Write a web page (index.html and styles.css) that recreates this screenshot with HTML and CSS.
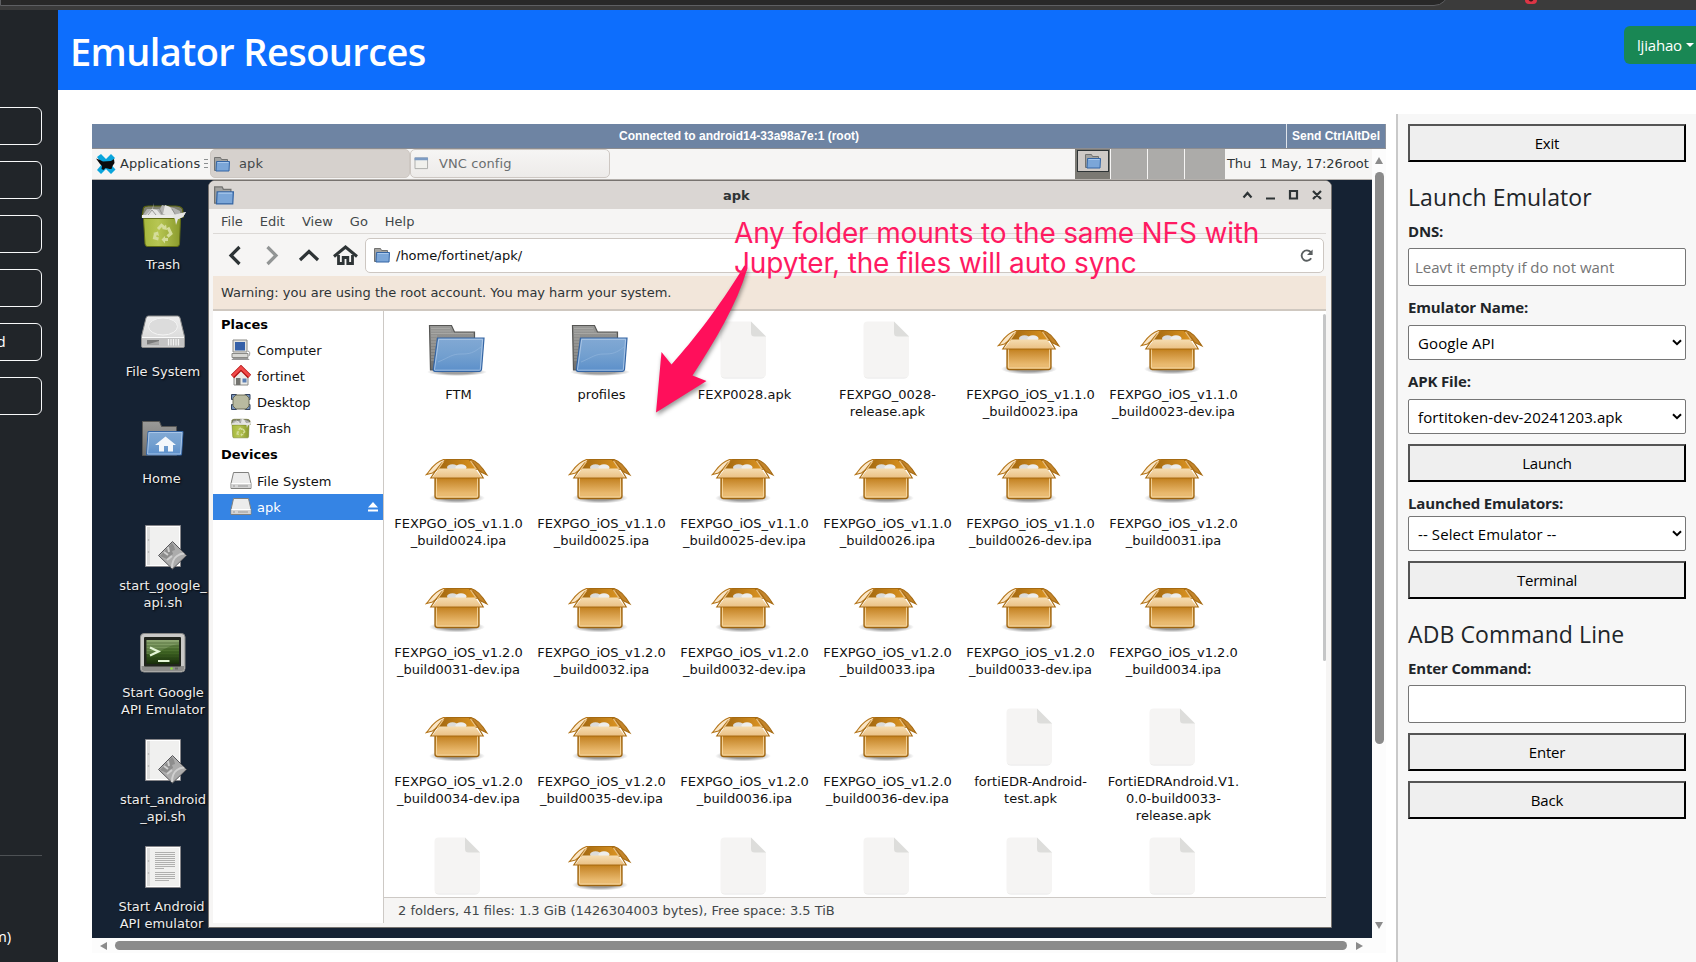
FILE: index.html
```html
<!DOCTYPE html>
<html lang="en">
<head>
<meta charset="utf-8">
<title>Emulator Resources</title>
<link rel="stylesheet" href="styles.css">
</head>
<body>
<svg class="defs" width="0" height="0">
  <defs>
    <linearGradient id="gBox" x1="0" y1="0" x2="0" y2="1"><stop offset="0" stop-color="#c17d11"/><stop offset=".15" stop-color="#c98a2e"/><stop offset=".75" stop-color="#e9b96e"/><stop offset="1" stop-color="#eabd76"/></linearGradient>
    <linearGradient id="gFlap" x1="0" y1="0" x2="0" y2="1"><stop offset="0" stop-color="#f5dcb0"/><stop offset="1" stop-color="#eac083"/></linearGradient>
    <linearGradient id="gIn" x1="0" y1="0" x2="1" y2="0"><stop offset="0" stop-color="#a0660f"/><stop offset="1" stop-color="#dd9522"/></linearGradient>
    <linearGradient id="gFold" x1="0" y1="0" x2="0" y2="1"><stop offset="0" stop-color="#82a9d4"/><stop offset=".55" stop-color="#729fcf"/><stop offset="1" stop-color="#5b8fca"/></linearGradient>
    <linearGradient id="gGrey" x1="0" y1="0" x2="0" y2="1"><stop offset="0" stop-color="#9a9a98"/><stop offset="1" stop-color="#6f6f6d"/></linearGradient>
    <linearGradient id="gDisk" x1="0" y1="0" x2="0" y2="1"><stop offset="0" stop-color="#eeeeee"/><stop offset="1" stop-color="#d3d3d3"/></linearGradient>
    <linearGradient id="gBin" x1="0" y1="0" x2="1" y2="0"><stop offset="0" stop-color="#a6b83e"/><stop offset=".4" stop-color="#b7c653"/><stop offset="1" stop-color="#8a9a2c"/></linearGradient>
    <linearGradient id="gTerm" x1="0" y1="0" x2="0" y2="1"><stop offset="0" stop-color="#7f9a63"/><stop offset=".5" stop-color="#446a26"/><stop offset="1" stop-color="#172c0a"/></linearGradient>
    <radialGradient id="gShade"><stop offset=".5" stop-color="#000" stop-opacity=".38"/><stop offset="1" stop-color="#000" stop-opacity="0"/></radialGradient>

    <symbol id="box" viewBox="0 0 64 64">
      <ellipse cx="32" cy="50" rx="28" ry="5.500" fill="url(#gShade)"/>
      <path d="M19 11.500h26l7 10H12z" fill="url(#gIn)" stroke="#a56a12"/>
      <ellipse cx="27.500" cy="19.500" rx="5.500" ry="3.200" fill="#dcdcda"/><ellipse cx="36" cy="19.500" rx="5.500" ry="3.200" fill="#ededeb"/>
      <path d="M10 29.500h44V48a2.500 2.500 0 0 1-2.500 2.500h-39A2.500 2.500 0 0 1 10 48z" fill="url(#gBox)" stroke="#9d6410" stroke-width="1.300"/>
      <path d="M11.500 30V48q0 1 1 1h39q1 0 1-1V30" fill="none" stroke="#f7d9a4" stroke-width="1" opacity=".85"/>
      <path d="M18.500 11.500h2L12 21.500 7.500 25 1.500 26.500C5 23 8 15 18.500 11.500z" fill="#fae6c6" stroke="#b4751a" stroke-width="1.100"/>
      <path d="M44 11.500h2c6 1.500 12 9 16 15.500L55 23.500z" fill="#c4852a" stroke="#a56a12" stroke-width="1.100"/>
      <path d="M14 20.500h36l7 9.500H7z" fill="url(#gFlap)" stroke="none"/>
      <path d="M17 14.500 11.500 21.500 5.800 30h52.400L52 19.500 47.500 14" fill="none" stroke="#ab6f16" stroke-width="1.200"/>
      <path d="M18.500 13.500 12.500 22M45.500 13l6 8.500" stroke="#ecc384" stroke-width="1.300"/>
    </symbol>
    <symbol id="file" viewBox="0 0 64 64">
      <path d="M14 3h25l15 15v37.500a4 4 0 0 1-4 4H14a4 4 0 0 1-4-4V7a4 4 0 0 1 4-4z" fill="#e6e6e5"/>
      <path d="M13.500 2.500H40l15 15V55a3.800 3.800 0 0 1-4 3.800H13.500A3.800 3.800 0 0 1 9.500 55V6.500a4 4 0 0 1 4-4z" fill="#f5f4f3"/>
      <path d="M40 2.500l15 15H43.500a3.500 3.500 0 0 1-3.500-3.500z" fill="#dddddb"/>
    </symbol>
    <symbol id="folder" viewBox="0 0 64 64">
      <ellipse cx="32" cy="53" rx="30" ry="4" fill="url(#gShade)"/>
      <path d="M4.500 6.500h22l3 6.500h20v38h-44z" fill="url(#gGrey)" stroke="#565654" stroke-width="1.200"/>
      <path d="M6 9.500h19M6 12h20M6 14.500h42M6 17h6M6 20h5M6 23h5M6 26h5M6 29h4M6 32h4M6 35h4M6 38h3M6 41h3" stroke="#b0b0ae" stroke-width=".700"/>
      <path d="M12.500 19h46.500l-2.500 31.500q-.3 1.800-2 1.800H10q-1.800 0-1.700-1.800z" fill="url(#gFold)" stroke="#3465a4" stroke-width="1.200"/>
      <path d="M13.700 20.300h43.900L55.300 50.500q-.2.700-1 .7H10q-.6 0-.5-.7z" fill="none" stroke="#b5cdea" stroke-width="1" opacity=".8"/>
      <path d="M13 43c12-5 14-8 23-8s12-1 20-7" fill="none" stroke="#94b7dd" stroke-width="1" opacity=".6"/>
    </symbol>
    <symbol id="disk" viewBox="0 0 48 48">
      <path d="M9.500 8h29q2 0 2.500 2l4.500 18.500V38q0 1.500-1.500 1.500H4Q2.500 39.500 2.500 38v-9.500L7 10q.5-2 2.500-2z" fill="url(#gDisk)" stroke="#8b8b8b"/>
      <ellipse cx="24" cy="18.500" rx="14.500" ry="8.500" fill="#dcdcdc" stroke="#f4f4f4"/>
      <path d="M3 30h42v8.500H3z" fill="#c3c3c3"/><path d="M3 29.500h42" stroke="#fafafa"/>
      <path d="M8 32h12v4.500H8z" fill="#7a7a7a"/><path d="M8 36.500 20 33v3.500z" fill="#aaa"/>
      <path d="M29.500 31v6.500M32 31v6.500M34.500 31v6.500M37 31v6.500M39.500 31v6.500" stroke="#f2f2f2" stroke-width="1.200"/>
    </symbol>
    <symbol id="sdisk" viewBox="0 0 22 22">
      <path d="M3.500 2.500h15l2.500 11v5h-20v-5z" fill="#ececec" stroke="#80807e"/>
      <path d="M1.500 13.500h19v4.500h-19z" fill="#d4d4d4"/><path d="M1.500 13.500h19" stroke="#fff"/>
      <path d="M4 17V15M9 17v-2M11 17v-2M13 17v-2M15 17v-2M17 17v-2" stroke="#999"/>
    </symbol>
    <symbol id="bin" viewBox="0 0 48 48">
      <path d="M4.500 7q1-2 5-2h27q5 0 7 3l1 8H3z" fill="#7d7f6d" stroke="#59620f" stroke-width="1.200"/>
      <path d="M4 14 8 8l5 0 2-6-1 6 7 0 2-4 12 3 6 3 1 6-4 4-8-2z" fill="#b1b1af"/>
      <path d="m7 14 6-6 5 1 4 5zM24 13l2-9 5 2 5 7-4 3zM34 14l13-3-3 5-5 2-2 6-2-5z" fill="#e4e4e2"/>
      <path d="m9 14 4-5 4 5M20 7l3 6M33 8l3 5M37 15l8-2" stroke="#858583" fill="none" stroke-width=".8"/>
      <path d="M4.500 17.500h37L40.500 43q-.2 2.500-2.500 2.500H8.500Q6.200 45.500 6 43z" fill="url(#gBin)" stroke="#606b14"/>
      <path d="M3 15.500h33q3 0 5 1.500" stroke="#ecece9" stroke-width="3.200" fill="none"/>
      <path d="m33 15 14-4-3 5-5 2-2 6-1-6z" fill="#e6e6e4"/>
      <g fill="none" stroke="#d5dd9b" stroke-width="3"><path d="m19 28 3.500-3.800 3 2.500M29 26.500l3 6-3.500 3M24.500 38.500H29M19.500 38l-4-1 1-4.500"/></g>
      <path d="m27 23.500 1 5.500-5-1zM26 35v7.500l-3.500-4zM14 32l5-1.500 1 4.500z" fill="#d5dd9b"/>
    </symbol>
    <symbol id="page" viewBox="0 0 48 48">
      <path d="M6.500 3.500h35v41h-35z" fill="#f0f0ef" stroke="#86868a"/><path d="M7.500 4.500h33v39h-33z" fill="none" stroke="#fff"/>
      <path d="M8 5h3v38H8z" fill="#dededd"/><circle cx="9.500" cy="18" r=".8" fill="#aaa"/><circle cx="9.500" cy="30" r=".8" fill="#aaa"/>
    </symbol>
    <symbol id="script" viewBox="0 0 48 48">
      <use href="#page"/>
      <path d="M33.500 19.500 47.500 33.500 33.500 47 19.500 33.500z" fill="#acacac" stroke="#57575a"/>
      <path d="m33 21 2 3 1 4-3 1 1 3-3 2-3 3-7-3z" fill="#8d8d8d"/>
      <path d="M33 46c0-6 2-10 5-12s5-3 7-2M29 25l1 5M25 30l4 3M28 38l5-4" stroke="#d0d0d0" stroke-width="2" fill="none"/>
    </symbol>
    <symbol id="textdoc" viewBox="0 0 48 48">
      <use href="#page"/>
      <path d="M16 9.500h20M16 11.500h20M16 13.500h20M16 15.500h20M16 17.500h20M16 19.500h20M16 21.500h20M16 23.500h20M16 25.500h9M16 29.500h20M16 31.500h20M16 33.500h20M16 35.500h20M16 37.500h14" stroke="#b0b0af" stroke-width="1"/>
    </symbol>
    <symbol id="term" viewBox="0 0 48 48">
      <rect x="1.500" y="4.500" width="44.500" height="38.500" rx="3.500" fill="#c9c9c7" stroke="#898987"/>
      <path d="M2.500 37h42.500v3q0 2-2 2h-38q-2.500 0-2.500-2z" fill="#8c8c8a"/>
      <rect x="5" y="8" width="37" height="29.500" rx="1" fill="#20241d"/>
      <rect x="7.500" y="11" width="32.500" height="24" fill="url(#gTerm)"/>
      <path d="M7.500 11H40v4C28 16 24 24 7.500 25z" fill="#a8bf8e" opacity=".35"/>
      <path d="M7.500 14H40M7.500 17H40M7.500 20H40M7.500 23H40M7.500 26H40M7.500 29H40M7.500 32H40" stroke="#203a0f" stroke-width=".8" opacity=".5"/>
      <path d="m11 18.500 8.500 4-8.500 4" fill="none" stroke="#e4f5d6" stroke-width="2.200"/><path d="M19 32h11.500" stroke="#e4f5d6" stroke-width="2"/>
      <circle cx="32.500" cy="39.500" r="1.200" fill="#8ae234"/><path d="M36 39.500h3" stroke="#6b6b69" stroke-width="2"/>
    </symbol>
    <symbol id="homefolder" viewBox="0 0 48 48">
      <path d="M3.500 6.500h17l2 5h15v29h-34z" fill="url(#gGrey)" stroke="#565654"/>
      <path d="M9 16.500h35l-1.500 23.500H7.500z" fill="url(#gFold)" stroke="#3465a4"/>
      <path d="M10 17.500h33l-1.400 21.500H8.600z" fill="none" stroke="#a9c6e8"/>
      <path d="M26.500 21.500 37 30h-3v6.500h-5V31h-4v5.500h-5V30h-4z" fill="#f3f7fb"/>
    </symbol>
    <symbol id="sfolder" viewBox="0 0 16 16">
      <path d="M.5 1.500h6l1 2h6v11h-13z" fill="#a3a3a1" stroke="#737371"/>
      <path d="M2.500 5.500h13l-.5 9.500H2z" fill="#7ba6d8" stroke="#3465a4"/><path d="M3.500 6.500h11" stroke="#a9c8ec"/>
    </symbol>
    <symbol id="window" viewBox="0 0 16 14"><path d="M1 1h13.500v11.500H1z" fill="#f0f0ec" stroke="#a9aaa7"/><path d="M.500.500h14.500v3H.500z" fill="#7d9cc4"/></symbol>
  </defs>
</svg>

<div class="browser"><div class="omnibox"></div><div class="badge"></div></div>

<div class="app">
  <aside class="side">
    <nav class="side-nav">
      <a class="side-btn"></a><a class="side-btn"></a><a class="side-btn"></a><a class="side-btn"></a><a class="side-btn">d</a><a class="side-btn"></a>
    </nav>
    <div class="side-rule"></div>
    <div class="side-foot">m)</div>
  </aside>

  <div class="main">
    <header class="header">
      <h1 class="title">Emulator Resources</h1>
      <button class="user">ljiahao<span class="caret"></span></button>
    </header>

    <div class="body">
      <section class="vnc">
        <div class="vnc-bar"><span class="vnc-status">Connected to android14-33a98a7e:1 (root)</span><span class="vnc-send">Send CtrlAltDel</span></div>
        <div class="vnc-view">
          <div class="desk">
            <div class="panel">
              <div class="apps">
                <svg class="mouse" viewBox="0 0 20 20"><path d="M1 3 5 0l5 5 5-5 4 4-5 5.500 5.500 6L15 20l-5-5-5 5-4-4 5-6z" fill="#0aa5dc"/><path d="M0 4.500 4 6l3 1.500 8-.5 3-2 .500 4-2 3-1 3h-2l-4-1-2 2-2-1 .500-3L4 10z" fill="#0b0b0b"/></svg>
                <span>Applications</span><i class="grip"></i>
              </div>
              <div class="task active"><svg class="i16"><use href="#sfolder"/></svg><span>apk</span></div>
              <div class="task"><svg class="i14" viewBox="0 0 16 14"><use href="#window"/></svg><span>VNC config</span></div>
              <div class="pager"><div class="pg on"><div class="mini"><svg class="i16"><use href="#sfolder"/></svg></div></div><div class="pg"></div><div class="pg"></div><div class="pg"></div></div>
              <div class="clock">Thu&nbsp; 1 May, 17:26</div><div class="whoami">root</div>
            </div>
            <div class="screen">
              <div class="shortcuts">
                <div class="short"><svg class="i48"><use href="#bin"/></svg><span>Trash</span></div>
                <div class="short"><svg class="i48"><use href="#disk"/></svg><span>File System</span></div>
                <div class="short"><svg class="i48"><use href="#homefolder"/></svg><span class="nudge">Home</span></div>
                <div class="short"><svg class="i48"><use href="#script"/></svg><span>start_google_<br>api.sh</span></div>
                <div class="short"><svg class="i48"><use href="#term"/></svg><span>Start Google<br>API Emulator</span></div>
                <div class="short"><svg class="i48"><use href="#script"/></svg><span>start_android<br>_api.sh</span></div>
                <div class="short"><svg class="i48"><use href="#textdoc"/></svg><span class="nudge">Start Android<br>API emulator</span></div>
              </div>

              <div class="win">
                <div class="win-title">
                  <svg class="i20"><use href="#sfolder"/></svg>
                  <b class="win-name">apk</b>
                  <svg class="win-ctl" viewBox="0 0 82 16" fill="none" stroke="#2e3436" stroke-width="2.200"><path d="m2.500 10.500 4-4.500 4 4.500M25 11.500h9M49 4h7v7.500h-7zM72 4l8 8M80 4l-8 8"/></svg>
                </div>
                <div class="win-body">
                  <div class="menu"><span>File</span><span>Edit</span><span>View</span><span>Go</span><span>Help</span></div>
                  <div class="tools">
                    <svg class="nav" viewBox="0 0 140 24" fill="none" stroke-width="3.200"><path d="M18.500 4 10 12.500l8.500 8.500" stroke="#2e3436"/><path d="m46.500 4 8.500 8.500L46.500 21" stroke="#929595"/><path d="m79 17 9-8.500L97 17" stroke="#2e3436"/><path d="m113 13.500 11.500-9.500L136 13.500" stroke="#2e3436" stroke-width="3"/><path d="M117.500 12v8.500h4.700v-6h4.600v6h4.700V12" stroke="#2e3436" stroke-width="2.800"/></svg>
                    <div class="path"><svg class="i16"><use href="#sfolder"/></svg><span>/home/fortinet/apk/</span><svg class="reload" viewBox="0 0 16 16"><path d="M13 11a5.500 5.500 0 1 1-.5-6.500" fill="none" stroke="#5a5f60" stroke-width="2"/><path d="M8.500 7.500h6V1.500z" fill="#5a5f60"/></svg></div>
                  </div>
                  <div class="warn">Warning: you are using the root account. You may harm your system.</div>
                  <div class="split">
                    <div class="places">
                      <div class="grp">Places</div>
                      <div class="place"><svg class="i22" viewBox="0 0 22 22"><path d="M3 1h14v12H3z" fill="#e3e3e0" stroke="#8a8a86"/><path d="M5 3h10v8.500H5z" fill="#3560a8"/><path d="M2 14.500h16v4H2z" fill="#d8d8d4" stroke="#8a8a86"/><path d="M3 19.500h15l1 1H2z" fill="#eee" stroke="#999"/><path d="M18 12q3 1 1 5" stroke="#999" fill="none"/></svg>Computer</div>
                      <div class="place"><svg class="i22" viewBox="0 0 22 22"><path d="M4 11 11 4l7 7v9H4z" fill="#ebebe8" stroke="#8b8b88"/><path d="M2.500 11.500 11 3l8.500 8.500" fill="none" stroke="#b01010" stroke-width="4.600"/><path d="M2.500 11 11 2.800 19.500 11" fill="none" stroke="#f04a4a" stroke-width="2.800"/><path d="M6 13h4.500v7H6z" fill="#73736f"/><path d="M12.500 13.500h4v4h-4z" fill="#5b7fb5"/></svg>fortinet</div>
                      <div class="place"><svg class="i22" viewBox="0 0 22 22"><path d="M1.500 3.500h5v5h-5zM15 3.500h5v5h-5zM1.500 13.500h5v5h-5zM15 13.500h5v5h-5z" fill="#7590b8" stroke="#33425e"/><path d="M6 4h10l3 3v8l-3 3H6l-3-3V7z" fill="#b9baa0" stroke="#6c6d58"/></svg>Desktop</div>
                      <div class="place"><svg class="i22" viewBox="0 0 48 48"><use href="#bin"/></svg>Trash</div>
                      <div class="grp">Devices</div>
                      <div class="place"><svg class="i22"><use href="#sdisk"/></svg>File System</div>
                      <div class="place sel"><svg class="i22"><use href="#sdisk"/></svg>apk<svg class="eject" viewBox="0 0 10 10"><path d="M5 0l5 5.500H0zM0 7.500h10v2H0z" fill="#fff"/></svg></div>
                    </div>
                    <div class="right">
                      <div class="files">
                        <div class="f"><svg class="i64"><use href="#folder"/></svg><span>FTM</span></div>
                        <div class="f"><svg class="i64"><use href="#folder"/></svg><span>profiles</span></div>
                        <div class="f"><svg class="i64"><use href="#file"/></svg><span>FEXP0028.apk</span></div>
                        <div class="f"><svg class="i64"><use href="#file"/></svg><span>FEXPGO_0028-<br>release.apk</span></div>
                        <div class="f"><svg class="i64"><use href="#box"/></svg><span>FEXPGO_iOS_v1.1.0<br>_build0023.ipa</span></div>
                        <div class="f"><svg class="i64"><use href="#box"/></svg><span>FEXPGO_iOS_v1.1.0<br>_build0023-dev.ipa</span></div>

                        <div class="f"><svg class="i64"><use href="#box"/></svg><span>FEXPGO_iOS_v1.1.0<br>_build0024.ipa</span></div>
                        <div class="f"><svg class="i64"><use href="#box"/></svg><span>FEXPGO_iOS_v1.1.0<br>_build0025.ipa</span></div>
                        <div class="f"><svg class="i64"><use href="#box"/></svg><span>FEXPGO_iOS_v1.1.0<br>_build0025-dev.ipa</span></div>
                        <div class="f"><svg class="i64"><use href="#box"/></svg><span>FEXPGO_iOS_v1.1.0<br>_build0026.ipa</span></div>
                        <div class="f"><svg class="i64"><use href="#box"/></svg><span>FEXPGO_iOS_v1.1.0<br>_build0026-dev.ipa</span></div>
                        <div class="f"><svg class="i64"><use href="#box"/></svg><span>FEXPGO_iOS_v1.2.0<br>_build0031.ipa</span></div>

                        <div class="f"><svg class="i64"><use href="#box"/></svg><span>FEXPGO_iOS_v1.2.0<br>_build0031-dev.ipa</span></div>
                        <div class="f"><svg class="i64"><use href="#box"/></svg><span>FEXPGO_iOS_v1.2.0<br>_build0032.ipa</span></div>
                        <div class="f"><svg class="i64"><use href="#box"/></svg><span>FEXPGO_iOS_v1.2.0<br>_build0032-dev.ipa</span></div>
                        <div class="f"><svg class="i64"><use href="#box"/></svg><span>FEXPGO_iOS_v1.2.0<br>_build0033.ipa</span></div>
                        <div class="f"><svg class="i64"><use href="#box"/></svg><span>FEXPGO_iOS_v1.2.0<br>_build0033-dev.ipa</span></div>
                        <div class="f"><svg class="i64"><use href="#box"/></svg><span>FEXPGO_iOS_v1.2.0<br>_build0034.ipa</span></div>

                        <div class="f"><svg class="i64"><use href="#box"/></svg><span>FEXPGO_iOS_v1.2.0<br>_build0034-dev.ipa</span></div>
                        <div class="f"><svg class="i64"><use href="#box"/></svg><span>FEXPGO_iOS_v1.2.0<br>_build0035-dev.ipa</span></div>
                        <div class="f"><svg class="i64"><use href="#box"/></svg><span>FEXPGO_iOS_v1.2.0<br>_build0036.ipa</span></div>
                        <div class="f"><svg class="i64"><use href="#box"/></svg><span>FEXPGO_iOS_v1.2.0<br>_build0036-dev.ipa</span></div>
                        <div class="f"><svg class="i64"><use href="#file"/></svg><span>fortiEDR-Android-<br>test.apk</span></div>
                        <div class="f"><svg class="i64"><use href="#file"/></svg><span>FortiEDRAndroid.V1.<br>0.0-build0033-<br>release.apk</span></div>

                        <div class="f"><svg class="i64"><use href="#file"/></svg></div>
                        <div class="f"><svg class="i64"><use href="#box"/></svg></div>
                        <div class="f"><svg class="i64"><use href="#file"/></svg></div>
                        <div class="f"><svg class="i64"><use href="#file"/></svg></div>
                        <div class="f"><svg class="i64"><use href="#file"/></svg></div>
                        <div class="f"><svg class="i64"><use href="#file"/></svg></div>
                        <div class="thumb"></div>
                      </div>
                      <div class="status">2 folders, 41 files: 1.3 GiB (1426304003 bytes), Free space: 3.5 TiB</div>
                    </div>
                  </div>
                </div>
              </div>
            </div>
          </div>
          <div class="vscroll"><i class="tri up"></i><i class="vthumb"></i><i class="tri down"></i></div>
          <div class="hscroll"><i class="tri left"></i><i class="hthumb"></i><i class="tri rightward"></i></div>
        </div>
      </section>

      <aside class="ctl">
        <button class="btn">Exit</button>
        <h3 class="h3">Launch Emulator</h3>
        <label class="lab tight">DNS:</label>
        <div class="inp">Leavt it empty if do not want</div>
        <label class="lab">Emulator Name:</label>
        <div class="sel-box"><span>Google API</span><svg class="chev" viewBox="0 0 10 7"><path d="m1 1.200 4 4 4-4" fill="none" stroke="#000" stroke-width="2"/></svg></div>
        <label class="lab">APK File:</label>
        <div class="sel-box"><span>fortitoken-dev-20241203.apk</span><svg class="chev" viewBox="0 0 10 7"><path d="m1 1.200 4 4 4-4" fill="none" stroke="#000" stroke-width="2"/></svg></div>
        <button class="btn">Launch</button>
        <label class="lab flush">Launched Emulators:</label>
        <div class="sel-box"><span>-- Select Emulator --</span><svg class="chev" viewBox="0 0 10 7"><path d="m1 1.200 4 4 4-4" fill="none" stroke="#000" stroke-width="2"/></svg></div>
        <button class="btn">Terminal</button>
        <h3 class="h3">ADB Command Line</h3>
        <label class="lab tight">Enter Command:</label>
        <div class="inp"></div>
        <button class="btn">Enter</button>
        <button class="btn">Back</button>
      </aside>
    </div>
  </div>
</div>

<svg class="arrow" width="110" height="165" viewBox="0 0 110 165"><path d="M104.500 8C106 5 109 7 108 10.500 98 45 76 82 53.500 116.500L67.500 122 17 153.500 22.500 93 32.500 105.500C56 79 78 51 104.500 8z" fill="#ff0f5b"/></svg>
<div class="note">Any folder mounts to the same NFS with<br>Jupyter, the files will auto sync</div>
</body>
</html>
```
FILE: styles.css
```css
* { box-sizing: border-box; }
body { margin: 0; width: 1696px; height: 962px; overflow: hidden; position: relative; display: flex; flex-direction: column; background: #fff; font-family: "Open Sans", "Noto Sans", sans-serif; font-size: 15px; color: #212529; }
.defs { position: absolute; }
svg { display: block; flex: none; }

.browser { height: 10px; flex: none; background: #3b3b3b; display: flex; overflow: hidden; }
.omnibox { width: 1449px; height: 30px; margin-top: -24px; background: #282828; border: 1px solid #5e5f62; border-radius: 0 0 15px 0; }
.badge { width: 12px; height: 12px; margin: -8px 0 0 76px; border-radius: 4px; background: radial-gradient(circle at 6px 7px, #3b1418 2px, #dc3545 3px); }

.app { flex: 1; display: flex; min-height: 0; }
.side { width: 58px; flex: none; background: #212529; color: #fff; overflow: hidden; }
.side-nav { padding-top: 97px; display: flex; flex-direction: column; gap: 16px; }
.side-btn { width: 60px; height: 38px; margin-left: -18px; border: 1px solid #f8f9fa; border-radius: 6px; display: flex; align-items: center; padding: 0 0 2px 13.500px; }
.side-rule { height: 1px; width: 42px; background: #4d5154; margin-top: 440px; }
.side-foot { margin: 68px 0 0 -7px; line-height: 24px; letter-spacing: -.2px; }

.main { flex: 1; min-width: 0; display: flex; flex-direction: column; }
.header { height: 80px; flex: none; background: #0d6efd; display: flex; justify-content: space-between; padding-left: 12px; overflow: hidden; }
.title { margin: 13px 0 0; font-size: 38px; line-height: 56px; font-weight: 600; letter-spacing: -.6px; color: #fff; white-space: nowrap; }
.user { height: 38px; width: 90px; margin: 16px -18px 0 0; border: 0; border-radius: 6px; background: #198754; color: #fff; font: 15px "Open Sans", sans-serif; padding: 0 0 0 13px; display: flex; align-items: center; letter-spacing: -.2px; }
.caret { border: 4.800px solid transparent; border-top-color: #fff; border-bottom: 0; margin-left: 4px; }

.body { flex: 1; display: flex; min-height: 0; }
.vnc { width: 1294px; flex: none; margin: 34px 10px 0 34px; }
.vnc-bar { height: 25px; background: #6e84a3; border-bottom: 1px solid #8d8d90; display: flex; position: relative; justify-content: center; font: bold 12px/25px "Liberation Sans", Arial, sans-serif; color: #fff; }
.vnc-send { position: absolute; right: 0; top: 0; width: 100px; height: 24px; text-align: center; border-left: 1px solid #dfe3ea; border-right: 1px solid #8f959e; }
.vnc-view { display: grid; grid-template: 789px 15px / 1280px 14px; background: #fcfcfc; }
.desk { background: #152233; overflow: hidden; font: 13px/17px "DejaVu Sans", sans-serif; color: #2e3436; display: flex; flex-direction: column; }
.panel { height: 31px; flex: none; background: #f6f5f4; border-bottom: 1px solid #b4b0ac; display: flex; align-items: stretch; }
.apps { width: 118px; flex: none; display: flex; align-items: center; padding: 0 0 1px 4px; letter-spacing: .07px; }
.mouse { width: 20px; height: 20px; margin-right: 4px; }
.grip { width: 4px; height: 10px; margin-left: 4px; background: repeating-linear-gradient(#8c8f90 0 1px, transparent 1px 4px); }
.task { width: 199.500px; flex: none; margin: 0 .500px 1px 0; border: 1px solid #cdc7c2; border-radius: 5px; background: linear-gradient(#f6f5f4, #edebe9); display: flex; align-items: center; padding-left: 3px; color: #6a6e6f; }
.task span { padding-left: 10px; letter-spacing: .1px; }
.task.active { background: #d6d1cd; color: #43484a; }
.task.active span { padding-left: 9px; }
.i14 { width: 15px; height: 13px; }
.i16 { width: 16px; height: 16px; }
.i20 { width: 20px; height: 20px; }
.i22 { width: 22px; height: 22px; }
.i48 { width: 48px; height: 48px; }
.i64 { width: 64px; height: 64px; }
.pager { margin-left: 465px; width: 150px; flex: none; display: grid; grid-template-columns: 35px 36px 36px 40px; gap: 1px; }
.pg { background: #acaba9; }
.pg.on { background: #7b7973; padding: 1px 1px 0 2px; }
.mini { height: 22px; border: 1.500px solid #2e3436; background: #cfcac6; display: flex; align-items: center; justify-content: center; }
.clock { padding: 6px 0 0 2px; width: 118px; white-space: nowrap; letter-spacing: -.12px; }
.whoami { padding-top: 6px; letter-spacing: -.1px; }

.screen { flex: 1; min-height: 0; display: flex; }
.shortcuts { width: 116px; flex: none; padding-top: 21px; display: flex; flex-direction: column; }
.short { height: 107px; display: flex; flex-direction: column; align-items: center; width: 142px; color: #eee; text-shadow: 1px 1px 2px #000; text-align: center; white-space: nowrap; gap: 7px; flex: none; }
.nudge { margin-left: -3px; }

.win { position: relative; width: 1124px; height: 748px; background: #f6f5f4; border: 1px solid #77736f; border-radius: 7px 7px 0 0; display: flex; flex-direction: column; overflow: hidden; flex: none; }
.win-title { height: 28px; flex: none; background: #dad6d3; display: flex; align-items: center; padding-left: 5px; }
.win-name { padding-left: 489px; width: 1002px; }
.win-ctl { width: 82px; height: 16px; margin-left: 5px; }
.win-body { flex: 1; display: flex; flex-direction: column; min-height: 0; padding: 0 5px 4px 4px; }
.menu { height: 25px; flex: none; border-bottom: 1px solid #dcd9d6; display: flex; align-items: center; gap: 17px; padding-left: 8px; color: #43484a; }
.tools { height: 42px; flex: none; display: flex; align-items: center; }
.nav { width: 140px; height: 24px; margin: 0 2px 0 8px; }
.path { margin-left: 2px; height: 35px; flex: 1; margin-right: 2px; border: 1px solid #cdc7c2; border-radius: 5px; background: #fff; display: flex; align-items: center; padding: 0 9px 0 8px; color: #111; }
.path span { flex: 1; padding-left: 6px; }
.reload { width: 15px; height: 15px; }
.warn { height: 35px; flex: none; background: #f2e6da; border-bottom: 2px solid #cfc8c0; padding: 8px 0 0 8px; letter-spacing: -.02px; }
.split { flex: 1; display: flex; min-height: 0; }
.places { width: 171px; background: #fff; border-right: 1px solid #cdc9c5; color: #111; flex: none; }
.grp { height: 27px; line-height: 27px; font-weight: bold; padding-left: 8px; color: #000; }
.place { height: 26px; display: flex; align-items: center; padding-left: 17px; gap: 5px; }
.places .grp:first-child { height: 26px; }
.place.sel { background: #3584e4; color: #fff; width: 170px; }
.eject { width: 10px; height: 10px; margin: 0 5px 0 auto; }
.right { flex: 1; display: flex; flex-direction: column; min-width: 0; }
.files { position: relative; flex: 1; min-height: 0; overflow: hidden; background: #fff; display: grid; grid-template-columns: repeat(6, 143px); grid-auto-rows: 129px; padding: 8px 0 0 2px; color: #111; }
.f { display: flex; flex-direction: column; align-items: center; text-align: center; white-space: nowrap; }
.f .i64 { margin-right: 1px; }
.f span { margin-top: 3px; margin-left: 2px; }
.thumb { position: absolute; right: 0; top: 3px; width: 3px; height: 347px; background: #c5c6c7; border-radius: 2px; }
.status { height: 26px; flex: none; border-top: 1px solid #cdc9c5; padding: 4px 0 0 14px; color: #43484a; }

.vscroll { display: flex; flex-direction: column; align-items: center; }
.vthumb { width: 9px; height: 572px; border-radius: 5px; background: #8b8b8b; margin: 8px 0 178px; }
.tri { border: 4.500px solid transparent; }
.tri.up { border-bottom: 7px solid #8b8b8b; border-top: 0; margin-top: 8px; }
.tri.down { border-top: 7px solid #8b8b8b; border-bottom: 0; }
.hscroll { grid-column: 1; display: flex; align-items: center; }
.tri.left { border-right: 7px solid #8b8b8b; border-left: 0; margin-left: 8px; }
.hthumb { height: 9px; width: 1232px; border-radius: 5px; background: #8b8b8b; margin: 0 9px 0 8px; }
.tri.rightward { border-left: 7px solid #8b8b8b; border-right: 0; }

.ctl { flex: 1; margin-top: 24px; background: #f7f7f7; border-left: 2px solid #c9c9c9; padding: 10px 10px 0; display: flex; flex-direction: column; }
.btn { height: 38px; flex: none; border: 2px solid #000; border-color: #555 #000 #000 #555; background: #efefef; font: 15px "Open Sans", sans-serif; letter-spacing: -.2px; color: #000; margin: 0 0 10px; padding: 0 0 1px; }
.h3 { font-size: 23px; font-weight: 500; line-height: 29px; margin: 11px 0 8px; white-space: nowrap; letter-spacing: .1px; }
.lab { font-weight: 700; font-size: 15px; line-height: 22px; padding-bottom: 2px; margin-bottom: 5px; letter-spacing: -.15px; }
.lab.tight { margin-bottom: 4px; }
.lab.flush { margin-bottom: 0; }
.inp { height: 38px; flex: none; border: 1px solid #767676; border-radius: 2px; background: #fff; padding-left: 6px; line-height: 36px; color: #757575; margin-bottom: 10px; }
.sel-box { height: 35px; flex: none; border: 1px solid #767676; border-radius: 2px; background: #fff; padding: 0 3px 0 9px; display: flex; align-items: center; justify-content: space-between; color: #000; margin-bottom: 10px; letter-spacing: .1px; }
.chev { width: 10px; height: 7px; }

.arrow { position: absolute; left: 639px; top: 259px; filter: drop-shadow(1px 3px 2px rgba(0,0,0,.4)); }
.note { position: absolute; left: 734px; top: 218px; font: 28px/30px Inter, sans-serif; letter-spacing: -.17px; color: #ff1a62; white-space: nowrap; }
```
